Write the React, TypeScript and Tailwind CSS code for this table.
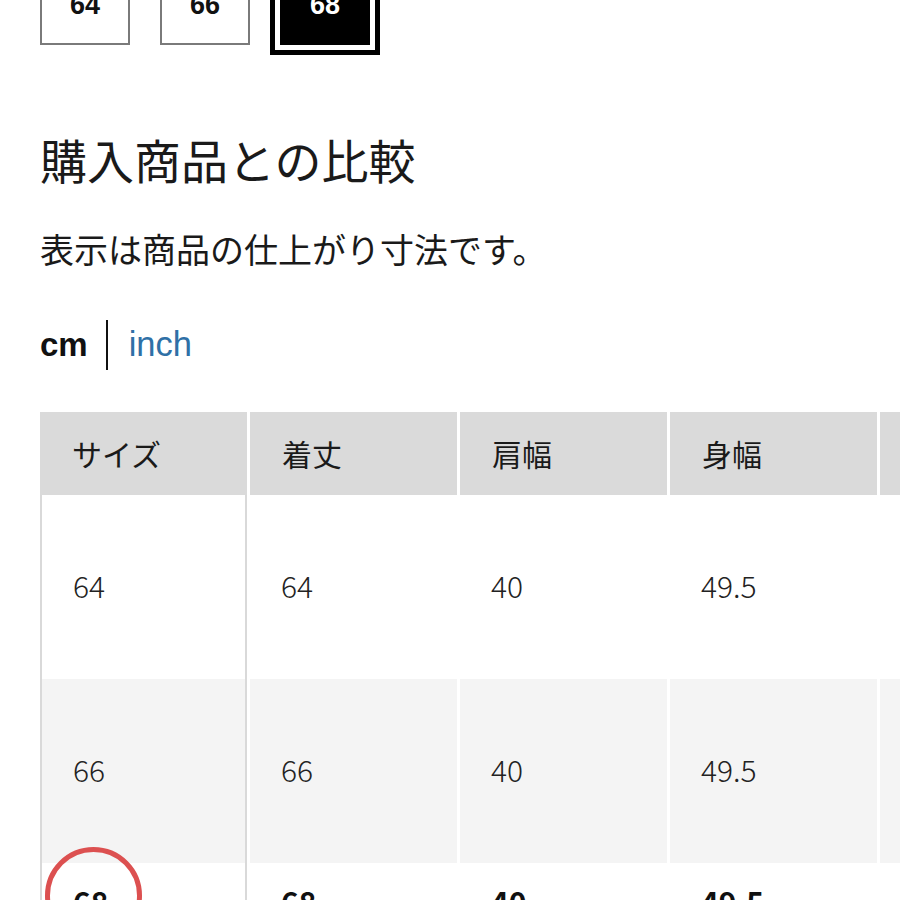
import * as React from 'react'

const jp = '"Noto Sans CJK JP", "Noto Sans", sans-serif'

const sizes = ['64', '66', '68']
const headers = ['サイズ', '着丈', '肩幅', '身幅', '']
const rows = [
  ['64', '64', '40', '49.5', ''],
  ['66', '66', '40', '49.5', ''],
]
const selectedRow = ['68', '68', '40', '49.5', '']

function SizeBox({ label, selected }: { label: string; selected?: boolean }) {
  return (
    <div
      className={
        selected
          ? 'flex h-[80px] w-[90px] items-center justify-center bg-black text-white outline-[5px] outline-offset-[5px] outline-black outline-solid'
          : 'flex h-[80px] w-[90px] items-center justify-center border-2 border-[#7a7a7a] bg-white text-[#111]'
      }
    >
      <span className="text-[27px] font-bold" style={{ fontFamily: '"Liberation Sans", Arial, sans-serif' }}>
        {label}
      </span>
    </div>
  )
}

function BodyRow({ cells, bg, bold }: { cells: string[]; bg: string; bold?: boolean }) {
  return (
    <div className="grid h-[184px] grid-cols-[207px_207px_207px_207px_207px] gap-x-[3px]">
      {cells.map((c, i) => (
        <div
          key={i}
          className={
            (i === 0 ? 'border-l-2 border-r-2 border-[#d9d9d9] pl-[31px] ' : 'pl-[31px] ') +
            (bold ? 'flex items-start pt-[16px] font-bold text-[#111] ' : 'flex items-center pb-[4px] font-light text-[#222] ') +
            bg +
            ' text-[30px]'
          }
        >
          {c}
        </div>
      ))}
    </div>
  )
}

export default function App() {
  return (
    <div className="relative h-[900px] w-[900px] overflow-hidden bg-white" style={{ fontFamily: jp }}>
      {/* size selector, top cut off */}
      <div className="-mt-[35px] flex gap-[30px] pl-[40px]">
        {sizes.map((s) => (
          <SizeBox key={s} label={s} selected={s === '68'} />
        ))}
      </div>

      <h2 className="mt-[84px] pl-[40px] text-[47px] leading-[60px] font-normal text-[#1a1a1a]">購入商品との比較</h2>

      <p className="mt-[38px] pl-[40px] text-[34px] leading-[44px] text-[#1a1a1a]">表示は商品の仕上がり寸法です。</p>

      <div
        className="mt-[49px] flex h-[50px] items-center pl-[40px]"
        style={{ fontFamily: '"Liberation Sans", Arial, sans-serif' }}
      >
        <span className="text-[33px] font-bold text-[#111]">cm</span>
        <span className="mr-[21px] ml-[18px] h-[50px] w-[2px] bg-[#111]" />
        <span className="text-[34.5px] text-[#2f70a6]">inch</span>
      </div>

      {/* size table */}
      <div className="mt-[42px] pl-[40px]">
        <div className="grid h-[83px] grid-cols-[207px_207px_207px_207px_207px] gap-x-[3px]">
          {headers.map((h, i) => (
            <div key={i} className="flex items-center bg-[#dadada] pl-[32px] text-[30px] text-[#1a1a1a]">
              {h}
            </div>
          ))}
        </div>
        <div className="w-[860px] border-r-2 border-[#dcdcdc]">
          <BodyRow cells={rows[0]} bg="bg-white" />
          <BodyRow cells={rows[1]} bg="bg-[#f4f4f4]" />
          <BodyRow cells={selectedRow} bg="bg-white" bold />
        </div>
      </div>

      {/* annotation circle */}
      <div className="absolute top-[847px] left-[45px] h-[97px] w-[97px] rounded-full border-[5px] border-[#dc5050]" />
    </div>
  )
}
